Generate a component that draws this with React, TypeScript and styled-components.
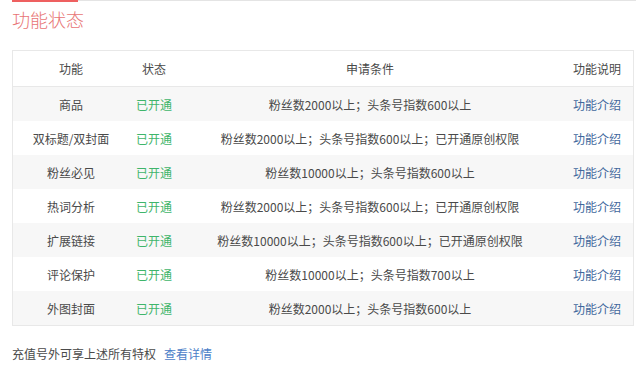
import React from "react";
import styled, { createGlobalStyle } from "styled-components";

const Global = createGlobalStyle`
  html, body { margin: 0; padding: 0; background: #fff; }
  body { font-family: "Noto Sans CJK SC", "Microsoft YaHei", sans-serif; color: #4a4a4a; }
`;

const Page = styled.div`
  width: 640px;
  height: 375px;
  padding: 0 4px 0 12px;
  box-sizing: border-box;
  display: flex;
  flex-direction: column;
`;

const TopRule = styled.div`
  display: flex;
  height: 2px;
`;

const TopAccent = styled.div`
  width: 66px;
  background: #ee6060;
`;

const TopLine = styled.div`
  flex: 1;
  border-top: 1px solid #e4e4e4;
`;

const Title = styled.h2`
  margin: 5px 0 0;
  font-size: 18px;
  line-height: 24px;
  font-weight: 300;
  color: #e87474;
`;

const Box = styled.div`
  margin-top: 19px;
  width: 622px;
  border: 1px solid #e8e8e8;
  box-sizing: border-box;
`;

const Table = styled.table`
  width: 100%;
  border-collapse: collapse;
  table-layout: fixed;
  font-size: 12px;
`;

const HeadCell = styled.th<{ $w: number }>`
  width: ${(p) => p.$w}px;
  height: 35px;
  font-weight: 400;
  color: #4a4a4a;
  text-align: center;
  border-bottom: 1px solid #e8e8e8;
  padding: 0;
`;

const Row = styled.tr<{ $shade: boolean }>`
  background: ${(p) => (p.$shade ? "#f7f7f7" : "#fff")};
`;

const Cell = styled.td<{ $tone?: "green" | "blue" }>`
  height: 34px;
  padding: 0;
  text-align: center;
  color: ${(p) => (p.$tone === "green" ? "#3fb56b" : p.$tone === "blue" ? "#41679c" : "#4a4a4a")};
`;

const Footer = styled.div`
  margin-top: 20px;
  font-size: 12px;
  line-height: 16px;
  color: #4a4a4a;
  display: flex;
  gap: 8px;
`;

const Link = styled.span`
  color: #4c80c8;
`;

const rows: [string, string][] = [
  ["商品", "粉丝数2000以上；头条号指数600以上"],
  ["双标题/双封面", "粉丝数2000以上；头条号指数600以上；已开通原创权限"],
  ["粉丝必见", "粉丝数10000以上；头条号指数600以上"],
  ["热词分析", "粉丝数2000以上；头条号指数600以上；已开通原创权限"],
  ["扩展链接", "粉丝数10000以上；头条号指数600以上；已开通原创权限"],
  ["评论保护", "粉丝数10000以上；头条号指数700以上"],
  ["外图封面", "粉丝数2000以上；头条号指数600以上"],
];

export default function App() {
  return (
    <Page>
      <Global />
      <TopRule>
        <TopAccent />
        <TopLine />
      </TopRule>
      <Title>功能状态</Title>
      <Box>
        <Table>
          <thead>
            <tr>
              <HeadCell $w={116}>功能</HeadCell>
              <HeadCell $w={50}>状态</HeadCell>
              <HeadCell $w={382}>申请条件</HeadCell>
              <HeadCell $w={72}>功能说明</HeadCell>
            </tr>
          </thead>
          <tbody>
            {rows.map(([name, cond], i) => (
              <Row key={name} $shade={i % 2 === 0}>
                <Cell>{name}</Cell>
                <Cell $tone="green">已开通</Cell>
                <Cell>{cond}</Cell>
                <Cell $tone="blue">功能介绍</Cell>
              </Row>
            ))}
          </tbody>
        </Table>
      </Box>
      <Footer>
        <span>充值号外可享上述所有特权</span>
        <Link>查看详情</Link>
      </Footer>
    </Page>
  );
}
